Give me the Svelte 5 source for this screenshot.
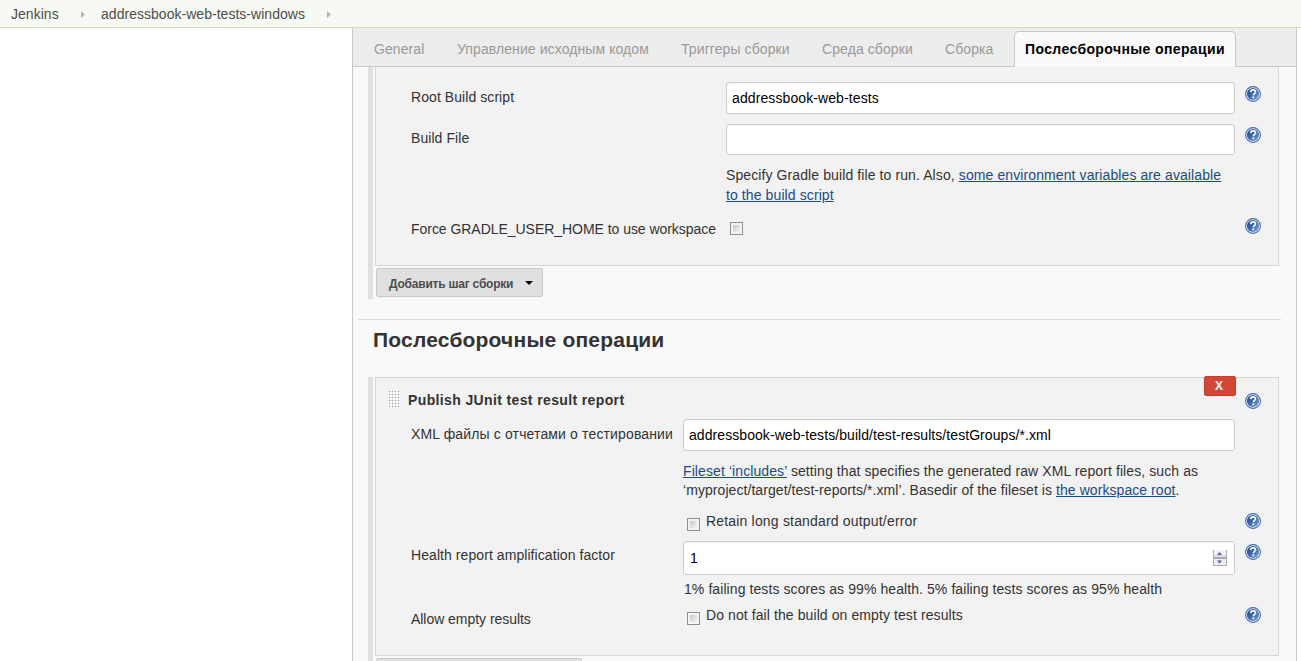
<script>
  let rootScript = $state('addressbook-web-tests');
  let buildFile = $state('');
  let xmlFiles = $state('addressbook-web-tests/build/test-results/testGroups/*.xml');
  let factor = $state('1');
  const tabs = [
    { name: 'General', width: 51 },
    { name: 'Управление исходным кодом', width: 192 },
    { name: 'Триггеры сборки', width: 109 },
    { name: 'Среда сборки', width: 91 },
    { name: 'Сборка', width: 48 },
    { name: 'Послесборочные операции', width: 200, active: true }
  ];
</script>

{#snippet help()}
  <svg class="help" viewBox="0 0 16 16" width="16" height="16">
    <defs>
      <linearGradient id="helpfill" x1="0" y1="0" x2="1" y2="1">
        <stop offset="0" stop-color="#204a87" />
        <stop offset="0.45" stop-color="#3a66a5" />
        <stop offset="1" stop-color="#83a5d2" />
      </linearGradient>
    </defs>
    <circle cx="8" cy="8" r="7.4" fill="#fff" stroke="#3e67a5" stroke-width="1.1" />
    <circle cx="8" cy="8" r="6.1" fill="url(#helpfill)" />
    <path d="M5.7 6.1C5.8 4.5 6.8 3.9 8.1 3.9c1.4 0 2.4.8 2.4 2 0 1.5-2.1 1.7-2.1 3.4" fill="none" stroke="#fff" stroke-width="1.6" />
    <rect x="7.4" y="10.4" width="1.8" height="1.8" fill="#fff" />
  </svg>
{/snippet}

<div class="page">
  <nav class="crumbs">
    <a href="#top" style:width="47px">Jenkins</a>
    <svg width="4" height="7" viewBox="0 0 4 7"><path d="M0 0L4 3.5L0 7Z" fill="#b3b5b0" /></svg>
    <a href="#job" style:width="204px">addressbook-web-tests-windows</a>
    <svg width="4" height="7" viewBox="0 0 4 7"><path d="M0 0L4 3.5L0 7Z" fill="#b3b5b0" /></svg>
  </nav>

  <main class="panel">
    <div class="tabs">
      {#each tabs as tab}
        <div class="tab" class:active={tab.active}><span style:width="{tab.width}px">{tab.name}</span></div>
      {/each}
    </div>

    <section class="group first">
      <div class="chunk">
        <div class="row wide r-root">
          <label for="root">Root Build script</label>
          <div class="field"><input id="root" class="text" bind:value={rootScript} /></div>
          {@render help()}
        </div>
        <div class="row wide r-file">
          <label for="file">Build File</label>
          <div class="field">
            <input id="file" class="text short" bind:value={buildFile} />
            <p class="note gradle">Specify Gradle build file to run. Also, <a href="#env">some environment variables are available<br />to the build script</a></p>
          </div>
          {@render help()}
        </div>
        <div class="row wide r-force">
          <label for="force">Force GRADLE_USER_HOME to use workspace</label>
          <div class="field"><input id="force" type="checkbox" class="box" /></div>
          {@render help()}
        </div>
      </div>
      <button class="add"><span>Добавить шаг сборки</span><svg width="8" height="4" viewBox="0 0 8 4"><path d="M0 0H8L4 4Z" fill="#000" /></svg></button>
    </section>

    <hr />
    <h2>Послесборочные операции</h2>

    <section class="group second">
      <div class="chunk">
        <button class="delete">X</button>
        <div class="title">
          <i class="grip"></i>
          <b>Publish JUnit test result report</b>
          {@render help()}
        </div>
        <div class="row r-xml">
          <label for="xml" class="ru">XML файлы с отчетами о тестировании</label>
          <div class="field">
            <input id="xml" class="text xml" bind:value={xmlFiles} />
            <p class="note files"><a href="#includes">Fileset ‘includes’</a> setting that specifies the generated raw XML report files, such as<br /><span class="tight">‘myproject/target/test-reports/*.xml’. Basedir of the fileset is <a href="#ws">the workspace root</a>.</span></p>
          </div>
        </div>
        <div class="row r-retain">
          <span></span>
          <label class="check"><input type="checkbox" class="box" />Retain long standard output/error</label>
          {@render help()}
        </div>
        <div class="row r-health">
          <label for="factor">Health report amplification factor</label>
          <div class="field">
            <div class="number">
              <input id="factor" bind:value={factor} />
              <svg width="14" height="16" viewBox="0 0 14 16">
                <path d="M0 0h14v16H0z" fill="#ababb0" />
                <path d="M1 0h12v7H1z" fill="#f4f4f5" /><path d="M1 5h12v2H1z" fill="#dedee2" />
                <path d="M1 9h12v6H1z" fill="#eeeef1" />
                <path d="M4 5L6.5 2L9 5zM4 10.5h5L6.5 13.5z" fill="#4b61b8" />
              </svg>
            </div>
            <p class="note score">1% failing tests scores as 99% health. 5% failing tests scores as 95% health</p>
          </div>
          {@render help()}
        </div>
        <div class="row r-empty">
          <label for="empty">Allow empty results</label>
          <label class="check"><input id="empty" type="checkbox" class="box" />Do not fail the build on empty test results</label>
          {@render help()}
        </div>
      </div>
      <button class="add next" aria-label="+"></button>
    </section>
  </main>
</div>

<style>
  :global(body) { margin: 0; background: #fff; }
  .page {
    width: 1301px; height: 661px; overflow: hidden;
    display: flex; flex-direction: column;
    font: 14px/20px "Liberation Sans", Arial, sans-serif; color: #333;
  }
  .page *, .page { box-sizing: border-box; }
  .crumbs {
    flex: none; height: 28px; padding: 0 11px; display: flex; align-items: center;
    background: #f6faf2; border-bottom: 1px solid #d3d7cf;
  }
  .crumbs a { color: #4d4d4d; text-decoration: none; white-space: nowrap; flex: none; letter-spacing: 0.03px; }
  .crumbs svg { flex: none; margin: 2px 16px 0 23px; }
  .crumbs a:nth-of-type(2) + svg { margin-left: 22px; }
  .panel {
    flex: none; width: 945px; height: 633px; margin-left: 352px; overflow: hidden;
    background: #f9f9f9; border: solid #c8c8c8; border-width: 0 1px;
  }
  .tabs {
    height: 39px; padding: 3px 0 0 10px; display: flex;
    background: #ededed; border-bottom: 1px solid #c8c8c8;
  }
  .tab {
    height: 36px; margin-right: 10px; padding: 7px 10px 0; border: 1px solid transparent;
    border-bottom: 0; color: #999; white-space: nowrap; letter-spacing: 0.09px;
  }
  .tab span { display: block; }
  .tab.active {
    background: #f9f9f9; border-color: #c8c8c8; border-radius: 5px 5px 0 0;
    color: #000; font-weight: bold; letter-spacing: 0.38px;
  }
  .group { margin-left: 15px; width: 911px; border-left: 5px solid #e0e0e0; padding-left: 2px; }
  .first { height: 232px; }
  .second { height: 290px; }
  .chunk { border: 1px solid #d6d6d6; background: #f2f2f2; position: relative; }
  .first .chunk { height: 199px; border-top: 0; padding-top: 15px; }
  .second .chunk { height: 279px; }
  .row {
    display: grid; grid-template-columns: 272px 552px 16px; column-gap: 0;
    padding-left: 35px; align-items: start; white-space: nowrap;
  }
  .row.wide { grid-template-columns: 315px 509px 16px; }
  .row .help { margin-left: 10px; }
  .row > label { padding-top: 5px; letter-spacing: 0.07px; }
  .row > .ru { letter-spacing: 0.14px; }
  .field { display: flex; flex-direction: column; }
  .text {
    width: 100%; height: 32px; padding: 0 5px; border: 1px solid #ccc; border-radius: 3px;
    box-shadow: inset 0 1px 1px rgba(0, 0, 0, 0.05); background: #fff;
    font: 14px "Liberation Sans", Arial, sans-serif; color: #000; letter-spacing: 0.1px;
  }
  .xml { letter-spacing: 0.07px; }
  .short { height: 31px; }
  .note { margin: 0; }
  a { color: #204a87; }
  .box {
    appearance: none; flex: none; width: 13px; height: 13px; margin: 0;
    border: 1px solid #8e8f8f;
    background: linear-gradient(135deg, #c4c8d0, #f5f5f6) content-box, #f4f4f4;
    padding: 2px;
  }
  .r-root { height: 42px; }
  .r-root .help { margin-top: 4px; }
  .r-file { height: 95px; }
  .r-file > label { padding-top: 4px; }
  .r-file .help { margin-top: 3px; }
  .gradle { padding-top: 10px; letter-spacing: 0.1px; }
  .r-force > label { padding-top: 0; letter-spacing: -0.04px; }
  .r-force .box { margin: 3px 0 0 4px; }
  .r-force .help { margin-top: -1px; }
  .add {
    display: flex; align-items: center; justify-content: space-between;
    width: 167px; height: 29px; margin: 2px 0 0 1px; padding: 0 9px 0 12px;
    border: 1px solid #c8c8c8; border-radius: 2px; background: #e0e0e0;
    font: bold 12px "Liberation Sans", Arial, sans-serif; letter-spacing: -0.22px; color: #4d4d4d; white-space: nowrap;
  }
  .add span { padding-top: 2px; }
  .next { width: 206px; }
  hr { width: 923px; height: 1px; margin: 20px 0 0 5px; border: 0; background: #dcdcdc; }
  h2 { height: 57px; margin: 0; padding: 8px 0 0 20px; font-size: 21px; line-height: 24px; letter-spacing: 0.2px; }
  .delete {
    position: absolute; left: 828px; top: -2px; width: 32px; height: 20px; padding: 0 2px 0 0;
    border: 1px solid #c43c2c; border-radius: 2px; background: #d14836; color: #f4f4f4;
    font: bold 12px "Liberation Sans", Arial, sans-serif;
  }
  .title { display: flex; height: 41px; padding: 12px 17px 0 12px; }
  .title b { flex: 1; margin-left: 8px; letter-spacing: 0.37px; }
  .title .help { margin-top: 3px; }
  .grip {
    width: 12px; height: 19px;
    background: radial-gradient(circle at 1.5px 1.5px, #aaa 0.8px, #fff 1.1px) 0 0 / 3px 3px;
  }
  .r-xml { height: 92px; }
  .files { padding-top: 11px; line-height: 19px; letter-spacing: 0.095px; }
  .tight { letter-spacing: 0.065px; }
  .row .check { display: flex; padding: 0 0 0 4px; letter-spacing: 0.09px; }
  .check .box { margin: 7px 6px 0 0; }
  .r-retain { height: 30px; }
  .r-retain .check { letter-spacing: 0.18px; }
  .r-retain .help { margin-top: 2px; }
  .r-health { height: 64px; }
  .r-health > label { padding-top: 4px; }
  .r-health .help { margin-top: 3px; }
  .number {
    display: flex; align-items: center; height: 34px; padding: 0 7px 0 6px;
    border: 1px solid #ccc; border-radius: 3px; background: #fff;
    box-shadow: inset 0 1px 1px rgba(0, 0, 0, 0.05);
  }
  .number input {
    flex: 1; min-width: 0; padding: 0; border: 0; background: none;
    font: 14px "Liberation Sans", Arial, sans-serif; color: #000;
  }
  .score { padding: 4px 0 0 1px; letter-spacing: 0.085px; }
  .r-empty > label:first-child { padding-top: 4px; letter-spacing: -0.04px; }
  .r-empty .help { margin-top: 2px; }
</style>
